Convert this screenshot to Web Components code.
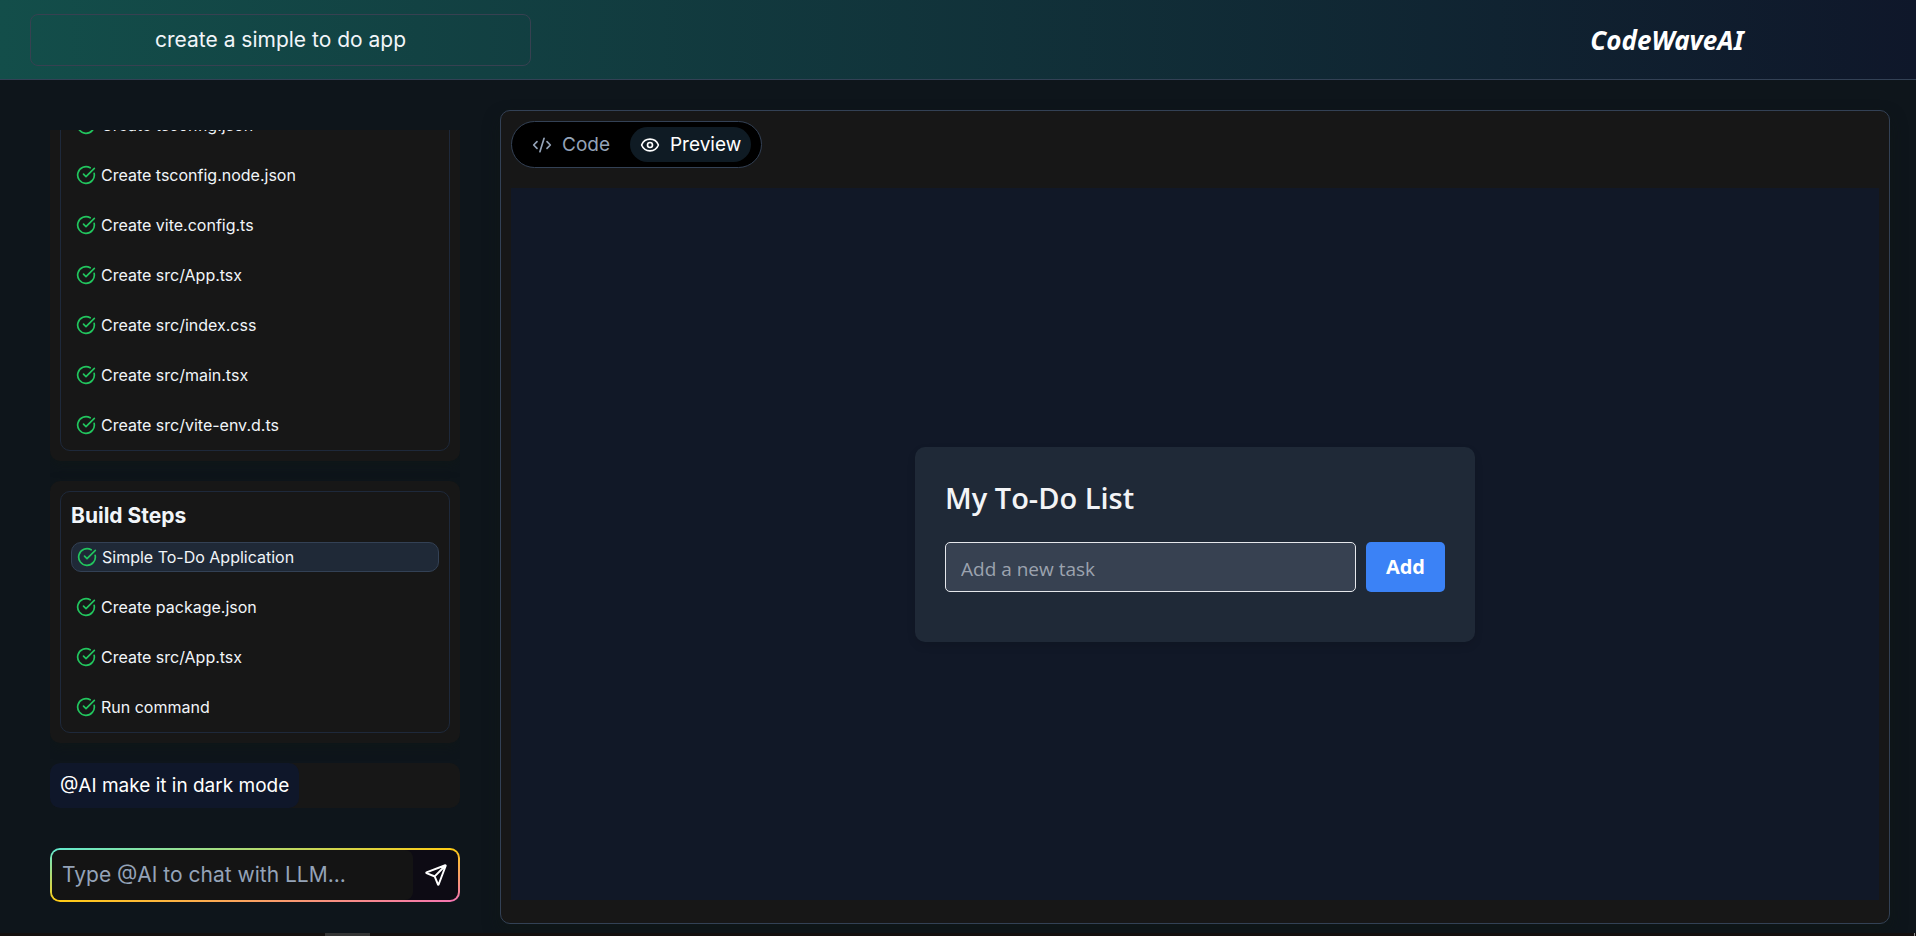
<!DOCTYPE html>
<html lang="en">
<head>
<meta charset="utf-8">
<title>CodeWaveAI</title>
<style>
  html, body { margin: 0; height: 100%; }
  body {
    background: #0e151b;
    color: #f1f5f9;
    font: 400 16px/24px Inter, "Noto Sans", sans-serif;
    overflow: hidden;
  }
</style>
</head>
<body>
<cw-app>
  <cw-header slot="header" brand="CodeWaveAI">create a simple to do app</cw-header>
  <cw-sidebar slot="sidebar">
    <cw-steps>
      <cw-step>Create tsconfig.json</cw-step>
      <cw-step>Create tsconfig.node.json</cw-step>
      <cw-step>Create vite.config.ts</cw-step>
      <cw-step>Create src/App.tsx</cw-step>
      <cw-step>Create src/index.css</cw-step>
      <cw-step>Create src/main.tsx</cw-step>
      <cw-step>Create src/vite-env.d.ts</cw-step>
    </cw-steps>
    <cw-steps heading="Build Steps">
      <cw-step active>Simple To-Do Application</cw-step>
      <cw-step>Create package.json</cw-step>
      <cw-step>Create src/App.tsx</cw-step>
      <cw-step>Run command</cw-step>
    </cw-steps>
    <cw-message>@AI make it in dark mode</cw-message>
    <cw-prompt slot="prompt"></cw-prompt>
  </cw-sidebar>
  <cw-workspace slot="workspace">
    <cw-todo></cw-todo>
  </cw-workspace>
</cw-app>

<script>
  const define = (name, html) => customElements.define(name, class extends HTMLElement {
    constructor() {
      super();
      const template = document.createElement('template');
      template.innerHTML = `<style>*, *::before, *::after { box-sizing: border-box; }</style>` + html(this);
      this.attachShadow({ mode: 'open' }).append(template.content.cloneNode(true));
    }
  });

  define('cw-app', () => `
    <style>
      :host { display: grid; grid-template-rows: auto minmax(0, 1fr) auto; height: 100vh; }
      main { display: grid; grid-template-columns: 410px minmax(0, 1fr); column-gap: 40px; padding: 30px 26px 9px 50px; min-height: 0; }
      .track { display: flex; justify-content: space-between; height: 3px; background: #14100f; }
      .track::before { content: ""; width: 45px; margin-left: 325px; background: #353535; }
      .track::after { content: ""; width: 1px; margin-right: 1px; background: #8a8a8a; }
    </style>
    <slot name="header"></slot>
    <main>
      <slot name="sidebar"></slot>
      <slot name="workspace"></slot>
    </main>
    <div class="track"></div>`);

  define('cw-header', el => `
    <style>
      :host { display: block; }
      header {
        display: flex; align-items: center; justify-content: space-between;
        height: 80px; padding: 0 30px; border-bottom: 1px solid #334155;
        background: linear-gradient(90deg, #134e4a, #0f172a);
      }
      p {
        width: 27%; margin: 0; padding: 10px; border: 1px solid #374151; border-radius: 8px;
        font-size: 21px; line-height: 30px; text-align: center;
      }
      h1 {
        width: 438px; margin: 0; color: #fff; text-align: center;
        font: italic 700 26px/32px "Comic Sans MS", "Noto Sans", sans-serif;
      }
    </style>
    <header><p><slot></slot></p><h1>${el.getAttribute('brand')}</h1></header>`);

  define('cw-sidebar', () => `
    <style>
      :host { display: flex; flex-direction: column; gap: 40px; min-height: 0; padding: 20px 0 22px; }
      .log { flex: 1; min-height: 0; overflow: hidden; display: flex; flex-direction: column; justify-content: flex-end; gap: 20px; }
    </style>
    <div class="log"><slot></slot></div>
    <slot name="prompt"></slot>`);

  define('cw-steps', el => `
    <style>
      :host { display: block; flex: none; padding: 10px; background: #171717; border-radius: 10px; box-shadow: 0 4px 12px #10171480; }
      section { padding: 10px; border: 1px solid #1e293b; border-radius: 10px; }
      h2 { margin: 0 0 12px; font-size: 21px; line-height: 28px; font-weight: 700; }
      .list { display: flex; flex-direction: column; gap: 20px; }
    </style>
    <section>
      ${el.hasAttribute('heading') ? `<h2>${el.getAttribute('heading')}</h2>` : ''}
      <div class="list" role="list"><slot></slot></div>
    </section>`);

  define('cw-step', () => `
    <style>
      :host { display: flex; align-items: center; gap: 5px; height: 30px; padding: 0 5px; box-sizing: border-box; }
      :host([active]) { background: #1f2937; border: 1px solid #334155; border-radius: 10px; }
      svg { flex: none; fill: none; stroke: #22c55e; stroke-width: 2; stroke-linecap: round; stroke-linejoin: round; }
    </style>
    <svg width="20" height="20" viewBox="0 0 24 24" aria-hidden="true"><path d="M21.801 10A10 10 0 1 1 17 3.335"/><path d="m9 11 3 3L22 4"/></svg>
    <span role="listitem"><slot></slot></span>`);

  define('cw-message', () => `
    <style>
      :host { display: flex; flex: none; background: #171717; border-radius: 10px; }
      p { margin: 0; padding: 9px 10px; background: #0f172a; border-radius: 10px; color: #fff; font-size: 19px; line-height: 27px; }
    </style>
    <p><slot></slot></p>`);

  define('cw-prompt', () => `
    <style>
      :host { display: block; flex: none; }
      form {
        display: flex; height: 54px; border: 2px solid transparent; border-radius: 10px; overflow: hidden;
        background: linear-gradient(#0d0b14, #0d0b14) padding-box, linear-gradient(to bottom right, #5eead4, #ffcc15, #f472b6) border-box;
      }
      input {
        flex: 1; min-width: 0; padding: 0 10px; border: 0; border-radius: 8px; outline: 0;
        background: #141414; color: #f1f5f9; font: 400 21px/30px Inter, sans-serif;
      }
      input::placeholder { color: #94a3b8; opacity: 1; }
      button { display: grid; place-items: center; width: 45px; padding: 0; border: 0; background: none; color: #fff; }
      svg { fill: none; stroke: currentColor; stroke-width: 42; stroke-linecap: round; stroke-linejoin: round; }
    </style>
    <form>
      <input type="text" aria-label="Message" placeholder="Type @AI to chat with LLM...">
      <button type="button" aria-label="Send">
        <svg width="24" height="24" viewBox="0 0 512 512" aria-hidden="true"><path d="M53.12 199.94l400-151.39a8 8 0 0 1 10.33 10.33l-151.39 400a8 8 0 0 1-15-.34l-67.4-166.09a16 16 0 0 0-10.11-10.11L53.46 215a8 8 0 0 1-.34-15.06zM460 52L227 285"/></svg>
      </button>
    </form>`);

  define('cw-workspace', () => `
    <style>
      :host {
        display: flex; flex-direction: column; gap: 20px; min-height: 0; box-sizing: border-box;
        padding: 10px 10px 23px; background: #171717; border: 1px solid #334155; border-radius: 10px;
        box-shadow: 0 8px 16px #10171480;
      }
      nav { display: flex; align-self: flex-start; gap: 10px; padding: 5px 10px; background: #000; border: 1px solid #334155; border-radius: 24px; }
      button {
        display: flex; align-items: center; gap: 10px; height: 35px; padding: 0 10px; border: 0; border-radius: 18px;
        background: none; color: #94a3b8; font: 400 19px/28px Inter, sans-serif;
      }
      button[aria-pressed="true"] { background: #0f1b24; color: #fff; }
      svg { fill: none; stroke: currentColor; stroke-width: 2; stroke-linecap: round; stroke-linejoin: round; }
      .frame { flex: 1; min-height: 0; display: grid; place-items: center; background: #111827; }
    </style>
    <nav>
      <button type="button" aria-pressed="false">
        <svg width="20" height="20" viewBox="0 0 24 24" aria-hidden="true"><path d="m18 16 4-4-4-4"/><path d="m6 8-4 4 4 4"/><path d="m14.5 4-5 16"/></svg>
        Code
      </button>
      <button type="button" aria-pressed="true">
        <svg width="20" height="20" viewBox="0 0 24 24" aria-hidden="true"><path d="M2.062 12.348a1 1 0 0 1 0-.696 10.75 10.75 0 0 1 19.876 0 1 1 0 0 1 0 .696 10.75 10.75 0 0 1-19.876 0"/><circle cx="12" cy="12" r="3"/></svg>
        Preview
      </button>
    </nav>
    <div class="frame"><slot></slot></div>`);

  define('cw-todo', () => `
    <style>
      :host {
        display: block; width: 560px; max-width: 100%; box-sizing: border-box; padding: 31px 30px 50px;
        background: #1f2937; border-radius: 10px; box-shadow: 0 4px 8px #0000001a;
        font-family: "Open Sans", "Noto Sans", sans-serif;
      }
      h2 { margin: 0 0 24px; color: #f3f4f6; font-size: 29px; line-height: 40px; font-weight: 600; }
      form { display: flex; gap: 10px; }
      input {
        flex: 1; min-width: 0; height: 50px; padding: 4px 15px 0; border: 1px solid #e5e7eb; border-radius: 5px;
        background: #374151; color: #f3f4f6; font: 400 19px/30px "Open Sans", sans-serif;
      }
      input::placeholder { color: #9ca3af; opacity: 1; }
      button { height: 50px; padding: 0 20px; border: 0; border-radius: 5px; background: #3b82f6; color: #fff; font: 700 20px/30px "Open Sans", sans-serif; }
    </style>
    <h2>My To-Do List</h2>
    <form>
      <input type="text" aria-label="New task" placeholder="Add a new task">
      <button type="button">Add</button>
    </form>`);
</script>
</body>
</html>
